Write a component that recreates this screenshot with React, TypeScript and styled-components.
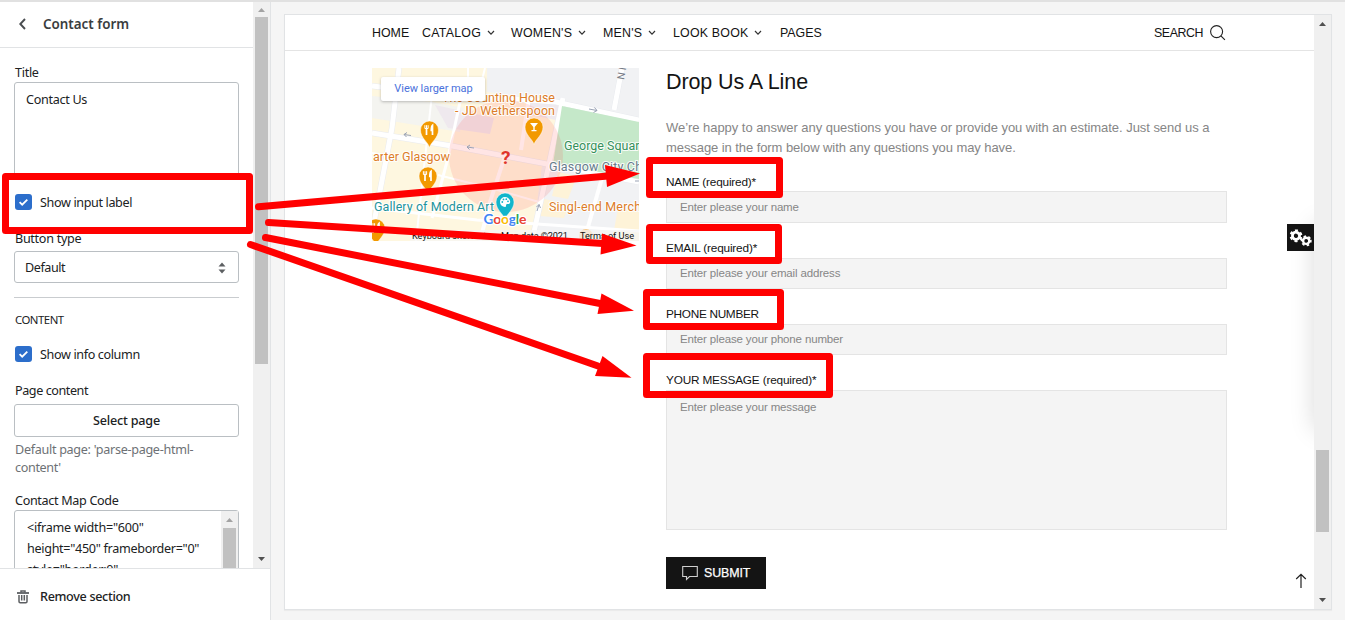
import React from 'react';
import styled, { createGlobalStyle } from 'styled-components';

const Global = createGlobalStyle`
  * { box-sizing: border-box; }
  html, body { margin: 0; padding: 0; overflow: hidden; background: #f5f5f5; }
`;

const ui = `'Noto Sans', 'Open Sans', sans-serif`;
const shop = `'Liberation Sans', Arial, sans-serif`;

const Page = styled.div`
  position: relative;
  display: flex;
  width: 1345px;
  height: 620px;
  overflow: hidden;
  background: #f5f5f5;
  border-top: 2px solid #e1e1e1;
`;

/* ---------- sidebar ---------- */
const Sidebar = styled.aside`
  display: flex;
  flex-direction: column;
  flex: none;
  width: 271px;
  height: 618px;
  background: #fff;
  border-right: 1px solid #e1e3e5;
  font: 12.6px/18px ${ui};
  color: #202223;
`;
const Scroller = styled.div`
  display: flex;
  height: 566px;
  overflow: hidden;
`;
const Pane = styled.div`
  flex: none;
  width: 253px;
`;
const PaneHead = styled.header`
  display: flex;
  align-items: center;
  height: 46px;
  padding: 0 0 1px 18px;
  gap: 15px;
  border-bottom: 1px solid #e1e3e5;
  font-size: 13.4px;
  font-weight: 600;
  color: #3a3d40;
`;
const Fields = styled.div`
  display: flex;
  flex-direction: column;
  padding: 0 14px 0 14px;
`;
const Spaced = styled.span<{ $ls?: number }>`
  white-space: pre;
  letter-spacing: ${p => p.$ls ?? 0}px;
`;
const Label = styled.div<{ $mt: number; $ls?: number; $size?: number }>`
  height: 18px;
  margin-top: ${p => p.$mt}px;
  padding-left: 1px;
  font-size: ${p => p.$size ?? 12.6}px;
  white-space: nowrap;
  letter-spacing: ${p => p.$ls ?? 0}px;
`;
const TitleArea = styled.div`
  height: 94px;
  padding: 8px 11px;
  border: 1px solid #babfc3;
  border-radius: 3px;
  letter-spacing: -0.3px;
`;
const CheckRow = styled.div<{ $mt: number; $ls: number }>`
  display: flex;
  align-items: center;
  gap: 8px;
  height: 18px;
  margin-top: ${p => p.$mt}px;
  padding-left: 1px;
  letter-spacing: ${p => p.$ls}px;
`;
const CheckText = styled.span`
  padding-top: 2px;
`;
const Check = styled.span`
  display: flex;
  width: 17px;
  height: 16px;
  border-radius: 3px;
  background: #2c6ecb;
`;
const Select = styled.div`
  display: flex;
  align-items: center;
  justify-content: space-between;
  height: 32px;
  margin-top: 3px;
  padding: 1px 12px 0 10px;
  border: 1px solid #babfc3;
  border-radius: 3px;
`;
const Rule = styled.div`
  height: 1px;
  margin-top: 14px;
  background: #c9cccf;
`;
const PageButton = styled.div`
  display: flex;
  align-items: center;
  justify-content: center;
  height: 33px;
  margin-top: 4px;
  border: 1px solid #babfc3;
  border-radius: 3px;
  font-weight: 500;
`;
const Help = styled.div`
  display: flex;
  flex-direction: column;
  margin-top: 4px;
  padding-left: 1px;
  color: #6d7175;
`;
const CodeArea = styled.div`
  display: flex;
  justify-content: space-between;
  height: 100px;
  border: 1px solid #babfc3;
  border-radius: 3px;
`;
const CodeText = styled.div`
  display: flex;
  flex-direction: column;
  padding: 6px 0 0 12px;
  line-height: 21px;
`;
const Track = styled.div`
  display: flex;
  flex-direction: column;
  align-items: center;
  flex: none;
  width: 17px;
  background: #f0f0f0;
`;
const Thumb = styled.div<{ $h: number }>`
  flex: none;
  width: 13px;
  height: ${p => p.$h}px;
  background: #c1c1c1;
`;
const Gap = styled.div<{ $h: number }>`
  flex: none;
  height: ${p => p.$h}px;
`;
const ArrowBox = styled.div<{ $h: number }>`
  display: flex;
  align-items: center;
  justify-content: center;
  flex: none;
  width: 17px;
  height: ${p => p.$h}px;
`;
const Footer = styled.footer`
  display: flex;
  align-items: center;
  gap: 9px;
  height: 52px;
  padding: 4px 0 0 15px;
  border-top: 1px solid #e1e3e5;
  font-weight: 500;
`;

/* ---------- preview ---------- */
const Preview = styled.main`
  display: flex;
  width: 1048px;
  height: 596px;
  margin: 12px 0 0 13px;
  border: 1px solid #e1e3e5;
  background: #fff;
  box-shadow: 0 1px 1px rgba(0, 0, 0, 0.04);
  font-family: ${shop};
`;
const Site = styled.div`
  position: relative;
  width: 1029px;
  height: 594px;
  overflow: hidden;
  color: #141414;
`;
const Nav = styled.nav`
  display: flex;
  align-items: center;
  height: 36px;
  padding: 0 88px 0 87px;
  border-bottom: 1px solid #e4e4e4;
  font-size: 12.4px;
  line-height: 16px;
`;
const NavItem = styled.span<{ $w: number; $ls: number }>`
  display: flex;
  align-items: center;
  gap: 6px;
  flex: none;
  width: ${p => p.$w}px;
  white-space: nowrap;
  letter-spacing: ${p => p.$ls}px;
`;
const SearchLink = styled.span`
  display: flex;
  align-items: center;
  gap: 7px;
  margin-left: auto;
  letter-spacing: -0.45px;
`;
const Content = styled.div`
  display: flex;
  gap: 27px;
  padding: 17px 0 0 87px;
`;
const Form = styled.section`
  display: flex;
  flex-direction: column;
  width: 561px;
`;
const Heading = styled.h2`
  margin: 0;
  font-size: 21.5px;
  line-height: 28px;
  font-weight: 400;
  letter-spacing: -0.1px;
`;
const Intro = styled.div`
  display: flex;
  flex-direction: column;
  margin-top: 22px;
  font-size: 13px;
  line-height: 20px;
  color: #868686;
`;
const FieldLabel = styled.div<{ $mt: number; $ls: number }>`
  height: 17px;
  margin-top: ${p => p.$mt}px;
  font-size: 11.8px;
  line-height: 17px;
  letter-spacing: ${p => p.$ls}px;
`;
const Input = styled.div<{ $h: number; $mt?: number; $lh?: number }>`
  height: ${p => p.$h}px;
  margin-top: ${p => p.$mt ?? 0}px;
  padding: 0 13px;
  border: 1px solid #e4e4e4;
  background: #f4f4f4;
  font-size: 11.5px;
  line-height: ${p => p.$lh ?? 30}px;
  letter-spacing: -0.15px;
  color: #868686;
`;
const Submit = styled.div`
  display: flex;
  align-items: center;
  gap: 6px;
  width: 100px;
  height: 32px;
  margin-top: 27px;
  padding-left: 16px;
  background: #141414;
  color: #fff;
  font-size: 12.4px;
  letter-spacing: -0.1px;
  -webkit-text-stroke: 0.25px #fff;
`;
const SettingsTab = styled.div`
  position: absolute;
  right: 0;
  top: 209px;
  display: flex;
  width: 27px;
  height: 27px;
  background: #141414;
`;
const DrawerShade = styled.div`
  position: absolute;
  left: 1029px;
  top: 209px;
  width: 40px;
  height: 206px;
  box-shadow: 0 0 24px rgba(0, 0, 0, 0.15);
`;
const ToTop = styled.div`
  position: absolute;
  right: 7px;
  top: 558px;
  display: flex;
`;
const Annotations = styled.svg`
  position: absolute;
  left: 0;
  top: -2px;
`;

const Up = ({ c }: { c: string }) => (
  <svg width="7" height="4" viewBox="0 0 7 4"><path d="M0 4L3.5 0L7 4Z" fill={c} /></svg>
);
const Down = ({ c }: { c: string }) => (
  <svg width="7" height="4" viewBox="0 0 7 4"><path d="M0 0L3.5 4L7 0Z" fill={c} /></svg>
);
const Tick = () => (
  <Check>
    <svg width="17" height="16" viewBox="0 0 17 16"><path d="M4.6 8.2L7.2 10.7L12.3 5.6" fill="none" stroke="#fff" strokeWidth="1.8" /></svg>
  </Check>
);
const Caret = () => (
  <svg width="8" height="6" viewBox="0 0 8 6"><path d="M1 1L4 4.2L7 1" fill="none" stroke="#333" strokeWidth="1.2" /></svg>
);
const Gear = ({ x, y, s, turn }: { x: number; y: number; s: number; turn: number }) => (
  <g transform={`translate(${x} ${y}) rotate(${turn}) scale(${s})`} fill="none" stroke="#fff">
    <circle r="3.6" strokeWidth="2.8" />
    <circle r="5.3" strokeWidth="2.2" strokeDasharray="2.9 2.65" />
  </g>
);

const Pin = ({ x, y, fill, kind }: { x: number; y: number; fill: string; kind: 'fork' | 'drink' | 'art' }) => (
  <g transform={`translate(${x} ${y})`}>
    <path d="M0 17.5C-1.5 12-9 8-9 0A9 9 0 0 1 9 0C9 8 1.5 12 0 17.5Z" fill={fill} stroke="#fff" strokeWidth="0.5" />
    {kind === 'fork' && (
      <g fill="none" stroke="#fff">
        <path d="M-3 -1V5" strokeWidth="1.7" />
        <path d="M-4.6 -4.8V-1.5H-1.4V-4.8M-3 -4.8V-1" strokeWidth="1" />
        <path d="M3 5V-4.6Q1.8 -3.5 1.8 0.5H3" strokeWidth="1.7" />
      </g>
    )}
    {kind === 'drink' && <path d="M-4 -4H4L0.7 0V3H2.5V4.2H-2.5V3H-0.7V0Z" fill="#fff" />}
    {kind === 'art' && (
      <g>
        <path d="M0 -5A5 5 0 1 0 0 5C1.8 5 0.3 2.5 2 2H4C7 0 4 -5 0 -5Z" fill="#fff" />
        <g fill={fill}><circle cx="-2.7" cy="0" r="0.9" /><circle cx="-1.5" cy="-2.6" r="0.9" /><circle cx="1.3" cy="-2.8" r="0.9" /><circle cx="3" cy="-0.7" r="0.9" /></g>
      </g>
    )}
  </g>
);

const MapFrame = styled.div`
  flex: none;
  position: relative;
  width: 267px;
  height: 173px;
  overflow: hidden;
`;
const MapButton = styled.div`
  position: absolute;
  left: 9px;
  top: 9px;
  width: 104px;
  height: 24px;
  padding-left: 1px;
  border-radius: 2px;
  background: #fff;
  box-shadow: 0 1px 3px rgba(0, 0, 0, 0.25);
  font: 11px/23px Roboto, sans-serif;
  letter-spacing: -0.05px;
  text-align: center;
  color: #4a72dc;
`;

const CityMap = () => (
  <MapFrame>
    <svg width="267" height="173" viewBox="0 0 267 173" fontFamily="Roboto, sans-serif">
      <rect width="267" height="173" fill="#fef7e0" />
      <g fill="#f1f2f4">
        <path d="M115 0H267V51L184 34L115 24Z" />
        <path d="M0 28L60 34L92 40L88 64L0 50Z" opacity="0.8" />
        <path d="M170 98L267 112V173H160Z" />
      </g>
      <path d="M63 37L122 50L118 66L76 60Z" fill="#efe9ee" />
      <path d="M157 30L188 38L184 52L154 46Z" fill="#efe9ee" />
      <path d="M186 104L205 108L196 131L180 128ZM172 131L197 136L192 150L168 148Z" fill="#fef3d8" />
      <path d="M246 140L267 144V173H240Z" fill="#fef3d8" />
      <g stroke="#e9ebef" strokeWidth="6" fill="none">
        <path d="M0 65L80 78L175 96L267 114" /><path d="M0 18L60 25L184 34L267 52" />
        <path d="M191 30L177 96L160 173" /><path d="M250 0L242 42" /><path d="M27 0L20 60L0 165" />
      </g>
      <g stroke="#fff" fill="none" strokeWidth="5">
        <path d="M0 65L80 78L175 96L267 114" /><path d="M0 18L60 25L184 34L267 52" />
        <path d="M191 30L177 96L160 173" /><path d="M250 0L242 42" /><path d="M27 0L20 60L0 165" />
        <path d="M230 110L212 173" strokeWidth="4" /><path d="M133 88L118 134L108 173" strokeWidth="4" />
        <path d="M157 30L149 82" strokeWidth="4" /><path d="M88 34L76 90L60 150" strokeWidth="3" />
        <path d="M0 85L18 88M66 107L122 121L167 134" strokeWidth="2" /><path d="M96 0V28M113 0L106 28" strokeWidth="2" />
        <path d="M0 140L105 152L267 163" strokeWidth="3" /><path d="M60 26L44 173" strokeWidth="2" />
      </g>
      <path d="M190 38L267 54V111L181 96Z" fill="#c5e8c9" />
      <ellipse cx="134" cy="88" rx="57" ry="56" fill="#ff5050" fillOpacity="0.15" />
      <g stroke="#9aa3b5" strokeWidth="1" fill="none">
        <path d="M39 67.5L32 66.5M35 64.5L32 66.5L34.5 69" />
        <path d="M102 80L95 79M98 77L95 79L97.5 81.5" />
        <path d="M217 41L225 42.5M222.5 39.5L225 42.5L221.5 44.5" />
        <path d="M165 143L167 136.5M164.500 139L167 136.500L168.500 140" />
        <path d="M267 113H263" />
      </g>
      <text transform="translate(252 12) rotate(-80)" fontSize="10" fill="#777c86">N H</text>
      <g fontSize="12.5" stroke="#fff" strokeWidth="2.2" strokeOpacity="0.85" paintOrder="stroke" strokeLinejoin="round">
        <g fill="#dd7d28">
          <text x="70" y="34" textLength="113">The Counting House</text>
          <text x="83" y="46.5" textLength="100">- JD Wetherspoon</text>
          <text x="1" y="93" textLength="77">arter Glasgow</text>
          <text x="177" y="142.5" textLength="99">Singl-end Mercha</text>
        </g>
        <text x="2" y="142.5" textLength="120" fill="#1e949c">Gallery of Modern Art</text>
        <text x="192" y="82" textLength="82" fill="#35905a">George Square</text>
        <text x="177" y="103" textLength="100" fill="#677c8c">Glasgow City Cha</text>
      </g>
      <text x="129" y="95.500" fontSize="19" fontWeight="700" fill="#e0352b">?</text>
      <Pin x={57.5} y={62} fill="#f29900" kind="fork" />
      <Pin x={56} y={108} fill="#f29900" kind="fork" />
      <Pin x={162} y={59} fill="#f29900" kind="drink" />
      <Pin x={4} y={160} fill="#f29900" kind="fork" />
      <Pin x={133} y={134} fill="#12b5cb" kind="art" />
      <circle cx="214" cy="168" r="7" fill="#f7c98b" />
      <rect x="38" y="162" width="229" height="11" fill="#f5f5f5" fillOpacity="0.7" />
      <text x="111.5" y="155.5" fontSize="14" fontFamily="Lato, sans-serif" fontWeight="700" textLength="43" stroke="#fff" strokeWidth="2.5" paintOrder="stroke">
        <tspan fill="#4285f4">G</tspan><tspan fill="#ea4335">o</tspan><tspan fill="#fbbc05">o</tspan><tspan fill="#4285f4">g</tspan><tspan fill="#34a853">l</tspan><tspan fill="#ea4335">e</tspan>
      </text>
      <g fontSize="9.2" fill="#111">
        <text x="40" y="171" textLength="79">Keyboard shortcuts</text>
        <text x="129" y="171" textLength="67">Map data ©2021</text>
        <text x="208" y="171" textLength="54">Terms of Use</text>
      </g>
    </svg>
    <MapButton>View larger map</MapButton>
  </MapFrame>
);

export default function App() {
  return (
    <Page>
      <Global />
      <Sidebar>
        <Scroller>
          <Pane>
            <PaneHead>
              <svg width="10" height="12" viewBox="0 0 10 12"><path d="M7 1L2.3 6L7 11" fill="none" stroke="#4a4d50" strokeWidth="1.9" /></svg>
              <Spaced $ls={0}>Contact form</Spaced>
            </PaneHead>
            <Fields>
              <Label $mt={16} $ls={-0.3}>Title</Label>
              <TitleArea>Contact Us</TitleArea>
              <CheckRow $mt={17} $ls={-0.37}><Tick /><CheckText>Show input label</CheckText></CheckRow>
              <Label $mt={19} $ls={-0.3}>Button type</Label>
              <Select>
                <Spaced $ls={-0.45}>Default</Spaced>
                <svg width="8" height="12" viewBox="0 0 8 12"><path d="M0.5 4.5L4 0.5L7.5 4.5ZM0.5 7.5L4 11.5L7.5 7.5Z" fill="#5c5f62" /></svg>
              </Select>
              <Rule />
              <Label $mt={13} $ls={-0.5} $size={11.4}>CONTENT</Label>
              <CheckRow $mt={16} $ls={-0.37}><Tick /><CheckText>Show info column</CheckText></CheckRow>
              <Label $mt={19} $ls={-0.43}>Page content</Label>
              <PageButton><Spaced $ls={-0.2}>Select page</Spaced></PageButton>
              <Help>
                <Spaced $ls={-0.3}>Default page: 'parse-page-html-</Spaced>
                <Spaced $ls={-0.35}>content'</Spaced>
              </Help>
              <Label $mt={15} $ls={-0.33}>Contact Map Code</Label>
              <CodeArea>
                <CodeText>
                  <Spaced $ls={-0.25}>{'<iframe width="600"'}</Spaced>
                  <Spaced $ls={-0.31}>{'height="450" frameborder="0"'}</Spaced>
                  <Spaced $ls={-0.3}>{'style="border:0"'}</Spaced>
                </CodeText>
                <Track>
                  <ArrowBox $h={17}><Up c="#a3a3a3" /></ArrowBox>
                  <Thumb $h={80} />
                </Track>
              </CodeArea>
            </Fields>
          </Pane>
          <Track>
            <ArrowBox $h={15}><Up c="#a3a3a3" /></ArrowBox>
            <Thumb $h={347} />
            <Gap $h={186} />
            <ArrowBox $h={17}><Down c="#505050" /></ArrowBox>
          </Track>
        </Scroller>
        <Footer>
          <svg width="16" height="16" viewBox="0 0 16 16"><path d="M2 4H14" stroke="#5c5f62" strokeWidth="1.8" /><path d="M6 3.500V2H10V3.500M4 6V12.500Q4 13.700 5.200 13.700H10.800Q12 13.700 12 12.500V6M6.700 6V11.500M9.300 6V11.500" fill="none" stroke="#5c5f62" strokeWidth="1.500" /></svg>
          <Spaced $ls={-0.33}>Remove section</Spaced>
        </Footer>
      </Sidebar>

      <Preview>
        <Site>
          <Nav>
            <NavItem $w={50} $ls={0}>HOME</NavItem>
            <NavItem $w={89} $ls={0.25}>CATALOG <Caret /></NavItem>
            <NavItem $w={92} $ls={0.25}>WOMEN'S <Caret /></NavItem>
            <NavItem $w={70} $ls={0.2}>MEN'S <Caret /></NavItem>
            <NavItem $w={107} $ls={0.2}>LOOK BOOK <Caret /></NavItem>
            <NavItem $w={50} $ls={0}>PAGES</NavItem>
            <SearchLink>
              SEARCH
              <svg width="16" height="16" viewBox="0 0 16 16"><circle cx="6.6" cy="6.600" r="6" fill="none" stroke="#222" strokeWidth="1.1" /><path d="M10.900 10.900L14.900 14.900" stroke="#222" strokeWidth="1.2" /></svg>
            </SearchLink>
          </Nav>
          <Content>
            <CityMap />
            <Form>
              <Heading>Drop Us A Line</Heading>
              <Intro>
                <Spaced $ls={-0.045}>We’re happy to answer any questions you have or provide you with an estimate. Just send us a</Spaced>
                <Spaced $ls={-0.075}>message in the form below with any questions you may have.</Spaced>
              </Intro>
              <FieldLabel $mt={16} $ls={-0.2}>NAME (required)*</FieldLabel>
              <Input $h={32}>Enter please your name</Input>
              <FieldLabel $mt={17} $ls={-0.17}>EMAIL (required)*</FieldLabel>
              <Input $h={31} $mt={1} $lh={28}>Enter please your email address</Input>
              <FieldLabel $mt={17} $ls={-0.3}>PHONE NUMBER</FieldLabel>
              <Input $h={31} $mt={1} $lh={28}>Enter please your phone number</Input>
              <FieldLabel $mt={17} $ls={-0.18}>YOUR MESSAGE (required)*</FieldLabel>
              <Input $h={140} $mt={1} $lh={32}>Enter please your message</Input>
              <Submit>
                <svg width="16" height="16" viewBox="0 0 16 16"><path d="M0.7 1.5H15.3V11.5H7.5L4.5 14.5V11.5H0.7Z" fill="none" stroke="#cfcfcf" strokeWidth="1.1" /></svg>
                SUBMIT
              </Submit>
            </Form>
          </Content>
          <DrawerShade />
          <SettingsTab>
            <svg width="27" height="27" viewBox="0 0 27 27">
              <Gear x={9} y={11.8} s={1} turn={12} />
              <Gear x={19.2} y={16.8} s={0.86} turn={-10} />
            </svg>
          </SettingsTab>
          <ToTop>
            <svg width="12" height="16" viewBox="0 0 12 16"><path d="M6 15V1.5M1.2 6L6 1.3L10.8 6" fill="none" stroke="#222" strokeWidth="1.2" /></svg>
          </ToTop>
        </Site>
        <Track>
          <ArrowBox $h={18}><Up c="#505050" /></ArrowBox>
          <Gap $h={417} />
          <Thumb $h={82} />
          <Gap $h={59} />
          <ArrowBox $h={17}><Down c="#505050" /></ArrowBox>
        </Track>
      </Preview>

      <Annotations width="1345" height="620" viewBox="0 0 1345 620">
        <g fill="none" stroke="#f00" strokeWidth="7" strokeLinejoin="round">
          <rect x="5.5" y="176.5" width="244" height="54" />
          <rect x="649.5" y="160.5" width="130" height="34" />
          <rect x="649.5" y="227.5" width="129" height="33" />
          <rect x="646.5" y="292.5" width="134" height="34" />
          <rect x="646.5" y="356.5" width="183" height="38" />
        </g>
        <g stroke="#f00" strokeWidth="7" strokeLinecap="round">
          <path d="M258.5 206.8L608 176" /><path d="M268.5 222.5L603 243.5" />
          <path d="M265.5 237.5L600 303.5" /><path d="M250.5 244.5L598 366" />
        </g>
        <g fill="#f00">
          <path d="M605 165L640 173.5L607 187Z" /><path d="M602 233.500L636.500 245.500L600.500 254.500Z" />
          <path d="M601.5 293.5L634 310.7L597.5 314Z" /><path d="M602.5 356L631.5 377.8L595 376Z" />
        </g>
      </Annotations>
    </Page>
  );
}
